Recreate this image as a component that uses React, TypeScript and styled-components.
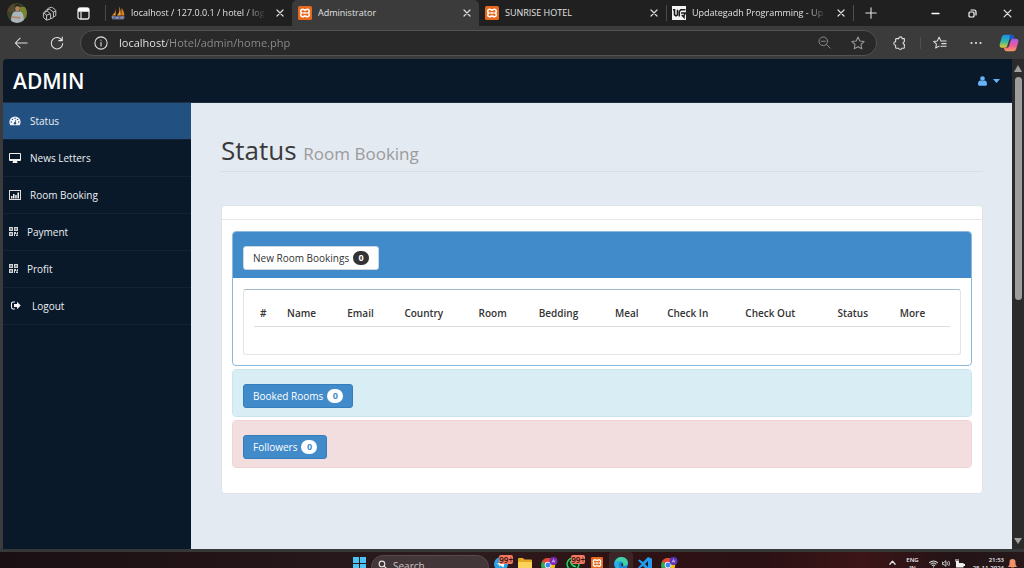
import React from "react";
import styled, { createGlobalStyle } from "styled-components";

const baseFont = `"Open Sans", "Liberation Sans", sans-serif`;

const GlobalStyle = createGlobalStyle`
  *, *::before, *::after { box-sizing: border-box; }
  html, body { margin: 0; padding: 0; }
  body { background: #3b3b3b; overflow: hidden; }
  button, input { font: inherit; color: inherit; margin: 0; padding: 0; border: 0; background: none; }
  button { cursor: pointer; }
  svg { display: block; flex: none; }
`;

const Window = styled.div`
  height: 100vh;
  display: flex;
  flex-direction: column;
  overflow: hidden;
  font-family: ${baseFont};
  color: #e2e2e2;
`;

/* ---------- browser tab strip ---------- */

const TabStrip = styled.header`
  flex: none;
  display: flex;
  align-items: stretch;
  height: 26px;
  background: #202020;
`;

const IconCell = styled.button<{ $width: number }>`
  flex: none;
  width: ${(p) => p.$width}px;
  display: flex;
  align-items: center;
  justify-content: center;
`;

const TabLead = styled.div`
  flex: none;
  display: flex;
  width: 105px;
`;

const Tab = styled.div<{ $active?: boolean; $line?: boolean }>`
  flex: 0 1 187px;
  min-width: 0;
  display: flex;
  align-items: center;
  gap: 6px;
  padding: 0 4px 0 5px;
  font-size: 9px;
  line-height: 16px;
  background: ${(p) => (p.$active ? "#3b3b3b" : "transparent")};
  border-radius: 5px 5px 0 0;
  &::before {
    content: "";
    flex: none;
    width: 1px;
    height: 16px;
    margin: 0 -1px 0 -5px;
    background: ${(p) => (p.$line ? "#4a4a4a" : "transparent")};
  }
`;

const TabTitle = styled.button<{ $fade?: boolean }>`
  flex: 1;
  min-width: 0;
  overflow: hidden;
  white-space: nowrap;
  text-align: left;
  mask-image: ${(p) => (p.$fade ? "linear-gradient(to right, #000 85%, transparent)" : "none")};
`;

const CloseTab = styled.button`
  flex: none;
  width: 16px;
  height: 16px;
  display: flex;
  align-items: center;
  justify-content: center;
`;

const StripLine = styled.span<{ $height: number }>`
  flex: none;
  align-self: center;
  width: 1px;
  height: ${(p) => p.$height}px;
  background: #4f4f4f;
`;

const WindowControls = styled.div`
  display: flex;
  margin-left: auto;
`;

/* ---------- browser toolbar ---------- */

const Toolbar = styled.nav`
  flex: none;
  display: flex;
  align-items: center;
  height: 33px;
  padding-left: 3px;
  background: #3b3b3b;
`;

const AddressBar = styled.div`
  flex: 1;
  min-width: 0;
  display: flex;
  align-items: center;
  height: 26px;
  margin: 0 3px 0 5px;
  padding: 0 2px;
  border: 1px solid #525252;
  border-radius: 13px;
  background: #292929;
`;

const AddressInput = styled.input`
  flex: 1;
  min-width: 0;
  font-size: 11px;
  line-height: 16px;
  color: transparent;
  background: linear-gradient(to right, #f2f2f2 48px, #8e8e8e 48px);
  background-clip: text;
  -webkit-background-clip: text;
`;

/* ---------- page ---------- */

const Viewport = styled.div`
  flex: 1;
  min-height: 0;
  display: flex;
  padding-left: 3px;
  background: #3b3b3b;
`;

const Page = styled.div`
  flex: 1;
  min-width: 0;
  display: flex;
  flex-direction: column;
  overflow: hidden;
  border-radius: 4px 0 0 0;
  background: #09192a;
`;

const TopBar = styled.header`
  flex: none;
  display: flex;
  align-items: center;
  justify-content: space-between;
  height: 44px;
  padding: 0 12px 0 10px;
  border-bottom: 1px solid #1d3045;
`;

const Brand = styled.a`
  font-size: 21px;
  line-height: 30px;
  font-weight: 600;
  color: #fff;
  text-decoration: none;
`;

const UserButton = styled.button`
  display: flex;
  align-items: center;
  gap: 6px;
  color: #64b5fb;
`;

const Columns = styled.div`
  flex: 1;
  min-height: 0;
  display: flex;
`;

const SideNav = styled.nav`
  flex: none;
  width: 188px;
`;

const NavLink = styled.a<{ $active?: boolean }>`
  display: flex;
  align-items: center;
  gap: 9px;
  height: 37px;
  padding: 0 6px 1px;
  border-bottom: 1px solid #102338;
  font-size: 10px;
  line-height: 16px;
  color: #eceff2;
  text-decoration: none;
  background: ${(p) => (p.$active ? "#225081" : "transparent")};
`;

const Content = styled.main`
  flex: 1;
  min-width: 0;
  padding: 30px 29px 30px 30px;
  background: #e4eaf2;
  color: #333;
`;

const PageHeading = styled.h1`
  margin: 0 0 33px;
  border-bottom: 1px solid #d5dde8;
  font-size: 26px;
  line-height: 34px;
  font-weight: 400;
  color: #3a3a3a;
`;

const Sub = styled.small`
  font-size: 17px;
  color: #9b9b9b;
`;

const Card = styled.section`
  border: 1px solid #dfe3e8;
  border-radius: 4px;
  background: #fff;
`;

const CardHead = styled.div`
  height: 14px;
  border-bottom: 1px solid #e8e8e8;
`;

const CardBody = styled.div`
  display: flex;
  flex-direction: column;
  gap: 3px;
  padding: 11px 10px 25px;
`;

type Tone = "primary" | "info" | "danger";

const tones: Record<Tone, { border: string; head: string }> = {
  primary: { border: "#8db9de", head: "#428bca" },
  info: { border: "#c9e6ee", head: "#d9edf5" },
  danger: { border: "#efd3d6", head: "#f2dede" },
};

const Panel = styled.section<{ $tone: Tone }>`
  border: 1px solid ${(p) => tones[p.$tone].border};
  border-radius: 4px;
  overflow: hidden;
  background: #fff;
`;

const PanelHead = styled.div<{ $tone: Tone }>`
  padding: 14px 10px 8px;
  background: ${(p) => tones[p.$tone].head};
`;

const PanelBody = styled.div`
  padding: 11px 10px 10px;
`;

const CountButton = styled.button<{ $light?: boolean }>`
  display: flex;
  align-items: center;
  gap: 4px;
  height: 24px;
  padding: 0 9px;
  border: 1px solid ${(p) => (p.$light ? "#ccd6e0" : "#357ebd")};
  border-radius: 3px;
  font-size: 10px;
  line-height: 16px;
  color: ${(p) => (p.$light ? "#333" : "#fff")};
  background: ${(p) => (p.$light ? "#fff" : "#428bca")};
`;

const Badge = styled.span<{ $light?: boolean }>`
  min-width: 16px;
  border-radius: 7px;
  font-size: 9px;
  line-height: 14px;
  font-weight: 700;
  text-align: center;
  color: ${(p) => (p.$light ? "#fff" : "#428bca")};
  background: ${(p) => (p.$light ? "#333" : "#fff")};
`;

const TableBox = styled.div`
  padding: 10px 10px 27px;
  border: 1px solid #e4e4e4;
  border-top-color: #a3b9d0;
  border-radius: 3px;
`;

const Table = styled.table`
  width: 100%;
  table-layout: fixed;
  border-collapse: collapse;
  font-size: 10px;
  line-height: 16px;
`;

const Th = styled.th`
  padding: 5px 6px;
  border-bottom: 1px solid #dcdcdc;
  text-align: left;
  white-space: nowrap;
  font-weight: 600;
  color: #333;
`;

/* ---------- scroll bar ---------- */

const ScrollBar = styled.div`
  flex: none;
  width: 12px;
  display: flex;
  flex-direction: column;
  align-items: center;
  padding: 6px 0 5px;
  gap: 5px;
  color: #a0a0a0;
  background: #2b2b2b;
`;

const ScrollTrack = styled.div`
  flex: 1;
  width: 7px;
`;

const ScrollThumb = styled.div`
  height: 49%;
  border-radius: 4px;
  background: #9d9d9d;
`;

/* ---------- taskbar ---------- */

const TaskBar = styled.footer`
  flex: none;
  display: grid;
  grid-template-columns: 1fr auto 1fr;
  height: 19px;
  border-top: 3px solid #363838;
  overflow: hidden;
  background: linear-gradient(to right, #1a1014, #221416 20%, #2c1c1f 45%, #2e1214 60%, #2c1114 75%, #3c1517 84%, #241316 93%, #26181b);
`;

const TaskApps = styled.div`
  grid-column: 2;
  display: flex;
  align-items: flex-start;
  padding-left: 4px;
`;

const AppButton = styled.button<{ $active?: boolean }>`
  position: relative;
  width: 24px;
  height: 26px;
  padding: 5px 0 0;
  display: flex;
  align-items: flex-start;
  justify-content: center;
  border-radius: 3px;
  background: ${(p) => (p.$active ? "#3b2527" : "transparent")};
`;

const AppBadge = styled.span`
  position: absolute;
  top: 3px;
  right: 0;
  border-radius: 2px;
  font-size: 8px;
  font-weight: 600;
  line-height: 9px;
  color: #30100c;
  background: #f4775f;
`;

const SearchBox = styled.label`
  display: flex;
  align-items: flex-start;
  gap: 6px;
  width: 118px;
  height: 24px;
  margin-top: 3px;
  padding: 4px 6px 0;
  border: 1px solid #584a4c;
  border-radius: 12px;
  background: #433638;
`;

const SearchInput = styled.input`
  width: 80px;
  height: 12px;
  font-size: 10px;
  line-height: 12px;
  &::placeholder { color: #c9c3c4; opacity: 1; }
`;

const Tray = styled.div`
  display: flex;
  align-items: flex-start;
  justify-content: flex-end;
  padding: 4px 7px 0 0;
  gap: 4px;
  font-size: 6px;
  font-weight: 600;
  line-height: 8px;
  color: #f0f0f0;
`;

const TrayText = styled.span<{ $right?: boolean; $width: number }>`
  width: ${(p) => p.$width}px;
  text-align: ${(p) => (p.$right ? "right" : "center")};
  white-space: nowrap;
`;

const TrayIcons = styled.div`
  display: flex;
  gap: 4px;
  padding-top: 3px;
`;

/* ---------- drawings ---------- */

const Stroke = ({ size = 14, box = 16, w = 1.2, color = "currentColor", children }: { size?: number; box?: number; w?: number; color?: string; children: React.ReactNode }) => (
  <svg width={size} height={size} viewBox={`0 0 ${box} ${box}`} fill="none" stroke={color} strokeWidth={w} strokeLinecap="round" strokeLinejoin="round" aria-hidden="true">
    {children}
  </svg>
);

const Avatar = () => (
  <svg width="20" height="20" viewBox="0 0 20 20" aria-hidden="true">
    <defs>
      <clipPath id="face"><circle cx="10" cy="10" r="10" /></clipPath>
    </defs>
    <g clipPath="url(#face)">
      <rect width="20" height="20" fill="#3a4427" />
      <rect x="13" y="4" width="7" height="12" fill="#77852f" />
      <rect width="7" height="9" fill="#55462f" />
      <path d="M4 20c0-7 1-10 3.500-11.500h6c2.500 1 3.500 5 3.500 11.500z" fill="#a9b6c0" />
      <path d="M5 13l9 1-1 2-8-1z" fill="#b98a70" />
      <ellipse cx="10.500" cy="5.500" rx="2.300" ry="3" fill="#b27e62" />
      <path d="M8 4.800c0-4.500 5.200-4.500 5.200 0l-1-1.500H9z" fill="#1f1916" />
    </g>
  </svg>
);

const Workspaces = () => (
  <Stroke size={15} w={1} color="#cfcfcf">
    <path d="M5.800 4.400V3.700c0-.7.4-1.100 1-1.300l3-1c.6-.2 1-.1 1.400.3l2.900 2.200c.4.3.6.7.6 1.300v4.600c0 .6-.3 1-.9 1.200l-1.500.5" />
    <path d="M3.500 6.200V5.700c0-.6.400-1 .9-1.200l3-.9c.5-.2.900-.1 1.300.2l2.900 2.300c.4.300.6.700.6 1.200v4.200c0 .6-.3 1-.8 1.200l-2.200.8" />
    <path d="M1.500 7.700c0-.6.400-.9.900-1.100l2.800-.8c.5-.1.900-.1 1.200.2L8.600 8c.4.300.6.700.6 1.200v3.700c0 .5-.3.900-.8 1.100l-2.800.9c-.5.100-.9.100-1.300-.2l-2.200-1.900c-.4-.3-.6-.7-.6-1.200z" />
    <path d="M2 7.500l2.900 2.300v4.900M4.900 9.800l4-1.300M12 6.500l2.500-.9" />
  </Stroke>
);

const TabActions = () => (
  <svg width="13" height="13" viewBox="0 0 13 13" aria-hidden="true">
    <rect x="1" y="1" width="11" height="11" rx="2" fill="none" stroke="#e6e6e6" strokeWidth="1.300" />
    <path d="M1 3a2 2 0 012-2h7a2 2 0 012 2v1.800H1z" fill="#fff" />
    <path d="M4 5v7" stroke="#e6e6e6" strokeWidth="1.200" />
  </svg>
);

const PmaIcon = () => (
  <svg width="14" height="14" viewBox="0 0 14 14" aria-hidden="true">
    <path d="M4.500 1.500C4.800 5 3.500 8 .8 9.500h4z" fill="#e8922b" />
    <path d="M7.500 0c1.700 3.500 1 7-1.700 9.500H9.800C10 6 9.500 2.500 7.500 0z" fill="#f6a12f" />
    <path d="M10.500 2c2 2 2.800 5 2.800 7.500h-3z" fill="#e07f1f" />
    <path d="M.5 10h13v1.200l-1 2.300H1.500L.5 11.500z" fill="#5c6488" />
    <path d="M1.500 12.500v-1.700h1.500M5 13v-2l1 1 1-1v2M10 13v-2h2v2" stroke="#aab0cf" fill="none" strokeWidth=".7" />
  </svg>
);

const Xampp = ({ size = 14 }: { size?: number }) => (
  <svg width={size} height={size} viewBox="0 0 14 14" aria-hidden="true">
    <rect width="14" height="14" rx="1.500" fill="#e8681d" />
    <path d="M4.700 3.200c1.400 0 1.700 1 2.300 1 .6 0 .9-1 2.300-1 2.400 0 2.600 3 1 3.800 1.600.8 1.400 3.800-1 3.800-1.400 0-1.700-1-2.300-1-.6 0-.9 1-2.300 1-2.400 0-2.600-3-1-3.800-1.600-.8-1.400-3.800 1-3.800z" fill="none" stroke="#fff" strokeWidth="1.600" />
    <path d="M5.300 7h3.400" stroke="#fff" strokeWidth="1.500" />
  </svg>
);

const UgIcon = () => (
  <svg width="14" height="14" viewBox="0 0 14 14" aria-hidden="true">
    <rect width="14" height="14" fill="#f4f4f4" />
    <path d="M1 3.800h1.500v5L4 9.800l1.500-1v-5" fill="none" stroke="#1b1b1b" strokeWidth="1.600" />
    <path d="M13.500 3.800H8.800L7.300 5.500v5M9 7h4.500L12 9.500v1.800L9.800 9" fill="none" stroke="#1b1b1b" strokeWidth="1.500" />
  </svg>
);

const Cross = ({ size = 8 }: { size?: number }) => (
  <Stroke size={size} box={8} w={1.2} color="#dedede"><path d="M1 1l6 6M7 1L1 7" /></Stroke>
);

const Copilot = () => (
  <svg width="20" height="18" viewBox="0 0 20 18" aria-hidden="true">
    <defs>
      <linearGradient id="cpA" x1="0" y1="0" x2="0" y2="1">
        <stop offset="0" stopColor="#1c8be8" /><stop offset=".5" stopColor="#2fb7a6" /><stop offset="1" stopColor="#e8c92a" />
      </linearGradient>
      <linearGradient id="cpB" x1="0" y1="0" x2="0" y2="1">
        <stop offset="0" stopColor="#a45cf0" /><stop offset=".55" stopColor="#ee5a9a" /><stop offset="1" stopColor="#f99a5c" />
      </linearGradient>
    </defs>
    <path d="M6 .8h6.500c1.300 0 1.800.8 2.200 2l.6 2H12c-1.200 0-1.800.8-2.200 2L8.200 12c-.4 1.200-1 1.700-2.200 1.700H3C.8 13.700.2 12 .8 10l2-7C3.300 1.500 4.300.8 6 .8z" fill="url(#cpA)" />
    <path d="M14 17.200H7.500c-1.300 0-1.800-.8-2.200-2l-.5-1.500H8c1.200 0 1.800-.8 2.200-2l1.600-5.200c.4-1.200 1-1.700 2.200-1.700h3c2.200 0 2.800 1.700 2.200 3.700l-2 6.500c-.5 1.500-1.500 2.200-3.200 2.200z" fill="url(#cpB)" />
    <path d="M11 .8h1.500c1.300 0 1.800.8 2.200 2l.6 2H12c-1 0-1.600.5-2 1.400z" fill="#1856c9" />
  </svg>
);

const Dashboard = () => (
  <svg width="12" height="10" viewBox="0 0 12 10" aria-hidden="true">
    <path d="M6 .5A5.600 5.600 0 00.4 6c0 1.200.3 2.300.9 3.200h9.400c.6-.9.9-2 .9-3.200A5.600 5.600 0 006 .5z" fill="#f2f5f8" />
    <g fill="#225081">
      <circle cx="2.300" cy="6" r=".7" /><circle cx="3.400" cy="3.400" r=".7" /><circle cx="6" cy="2.300" r=".7" />
      <circle cx="8.600" cy="3.400" r=".7" /><circle cx="9.700" cy="6" r=".7" /><circle cx="6" cy="7.200" r="1.200" />
    </g>
    <path d="M6 7.200l.8-3.400" stroke="#225081" strokeWidth=".8" />
  </svg>
);

const Desktop = () => (
  <svg width="12" height="10" viewBox="0 0 12 10" aria-hidden="true">
    <path d="M1 0h10a1 1 0 011 1v6a1 1 0 01-1 1H8l.4 1.500v.5H3.600v-.5L4 8H1a1 1 0 01-1-1V1a1 1 0 011-1zm0 1v5h10V1z" fill="#f2f2f2" fillRule="evenodd" />
  </svg>
);

const BarChart = () => (
  <svg width="12" height="10" viewBox="0 0 12 10" aria-hidden="true">
    <rect x=".5" y=".5" width="11" height="9" fill="none" stroke="#e4dcdc" />
    <path d="M2 6h1.500v2.500H2zM4 4h1.500v4.500H4zM6.200 5h1.500v3.500H6.200zM8.400 2.500H10v6H8.400z" fill="#f2f2f2" />
  </svg>
);

const QrCode = () => (
  <svg width="9" height="9" viewBox="0 0 9 9" aria-hidden="true">
    <g fill="#5a6470" stroke="#d4d4d8" strokeWidth="1">
      <rect x=".5" y=".5" width="3" height="3" /><rect x="5.500" y=".5" width="3" height="3" /><rect x=".5" y="5.500" width="3" height="3" />
    </g>
    <path d="M1.500 1.500h1v1h-1zM6.500 1.500h1v1h-1zM1.500 6.500h1v1h-1zM5 5h2v1.500h1V5h1v2.500H7V7H6v2H5zM7 8h1v1H7zM8 8h1v1H8z" fill="#d4d4d8" />
  </svg>
);

const SignOut = () => (
  <svg width="14" height="9" viewBox="0 0 14 9" aria-hidden="true">
    <path d="M6 1H4.200A1.700 1.700 0 002.500 2.700v3.600A1.700 1.700 0 004.200 8H6" fill="none" stroke="#f2f2f2" strokeWidth="1.100" />
    <path d="M8 .8l3.700 3.700L8 8.200V6H5V3h3z" fill="#f5f5f5" />
  </svg>
);

const UserIcon = () => (
  <svg width="9" height="10" viewBox="0 0 9 10" aria-hidden="true">
    <circle cx="4.500" cy="2.600" r="2.300" fill="currentColor" />
    <path d="M0 8.500C0 6 .9 4.700 2.400 4.600c1.200 1 3 1 4.200 0C8.100 4.700 9 6 9 8.500 9 9.300 8.400 9.700 7.700 9.700H1.300C.6 9.700 0 9.300 0 8.500z" fill="currentColor" />
  </svg>
);

const Caret = ({ w = 7, h = 4, up = false }: { w?: number; h?: number; up?: boolean }) => (
  <svg width={w} height={h} viewBox="0 0 6 4" preserveAspectRatio="none" aria-hidden="true">
    <path d={up ? "M3 0l3 4H0z" : "M0 0h6L3 4z"} fill="currentColor" />
  </svg>
);

const WindowsLogo = () => (
  <svg width="13" height="13" viewBox="0 0 13 13" aria-hidden="true">
    <path d="M0 0h6v6H0zM7 0h6v6H7zM0 7h6v6H0zM7 7h6v6H7z" fill="#4cc2f5" />
  </svg>
);

const Telegram = () => (
  <svg width="14" height="14" viewBox="0 0 14 14" aria-hidden="true">
    <circle cx="7" cy="7" r="7" fill="#2aa1e0" />
    <path d="M2.500 7l8.500-3.500-1.500 7-3-2.200-1.200 1.200-.2-2z" fill="#fff" />
  </svg>
);

const Folder = () => (
  <svg width="14" height="13" viewBox="0 0 14 13" aria-hidden="true">
    <path d="M0 2a1 1 0 011-1h4l1.500 1.500H13a1 1 0 011 1V11H0z" fill="#e5a823" />
    <path d="M0 5h14v6a1 1 0 01-1 1H1a1 1 0 01-1-1z" fill="#fcd45c" />
  </svg>
);

const Chrome = ({ badge }: { badge: string }) => (
  <svg width="18" height="17" viewBox="0 0 18 17" aria-hidden="true">
    <circle cx="8" cy="8" r="7" fill="#34a853" />
    <path d="M8 8L2 4.500A7 7 0 0114.500 5H8z" fill="#ea4335" />
    <path d="M8 15a7 7 0 006.500-10H8l3 5z" fill="#fbbc05" />
    <circle cx="8" cy="8" r="3.300" fill="#fff" />
    <circle cx="8" cy="8" r="2.500" fill="#4285f4" />
    <circle cx="13.500" cy="4" r="4" fill={badge} />
    <path d="M12.100 5.500l1.400-3 1.400 3M12.600 4.600h1.800" stroke="#e0cdf5" strokeWidth=".7" fill="none" />
  </svg>
);

const WhatsApp = () => (
  <svg width="14" height="14" viewBox="0 0 14 14" aria-hidden="true">
    <circle cx="7" cy="7" r="6" fill="#10301c" stroke="#25d366" strokeWidth="1.500" />
    <path d="M4.500 4c0 3 2.500 5.500 5.500 5.500" stroke="#25d366" strokeWidth="1.500" fill="none" />
  </svg>
);

const Edge = () => (
  <svg width="14" height="14" viewBox="0 0 14 14" aria-hidden="true">
    <circle cx="7" cy="7" r="7" fill="#1787d6" />
    <path d="M.5 6.500C1 2.500 4 0 7.500 0 11.500 0 14 3 14 5.800 14 8 12 9 10.500 9 8 9 9.500 7.500 9 6 8 3.500 3 3.500.5 6.500z" fill="#3fd0a4" />
    <path d="M5 6.500c-1 3 1 6 4.500 6.500H7A7 7 0 01.2 6C2 4 7 3.500 8.500 5.500c-1.500-.7-3 0-3.500 1z" fill="#2ab0e4" />
    <path d="M8.700 6.200c1 1.300-.3 2.300.8 2.900-2 .4-3.400-2-.8-2.900z" fill="#2b1a1c" />
  </svg>
);

const VsCode = () => (
  <svg width="14" height="14" viewBox="0 0 14 14" aria-hidden="true">
    <path d="M10 0l4 1.800v10.400L10 14 5 9 1.500 11.500 0 10.500 3.500 7 0 3.500l1.500-1L5 5zM10 4L7 7l3 3z" fill="#1f9cf0" fillRule="evenodd" />
  </svg>
);

/* ---------- data ---------- */

const tabs = [
  { title: "localhost / 127.0.0.1 / hotel / log", icon: <PmaIcon />, line: true, fade: true },
  { title: "Administrator", icon: <Xampp />, active: true },
  { title: "SUNRISE HOTEL", icon: <Xampp /> },
  { title: "Updategadh Programming - Up", icon: <UgIcon />, line: true, fade: true },
];

const links = [
  { label: "Status", icon: <Dashboard />, active: true },
  { label: "News Letters", icon: <Desktop /> },
  { label: "Room Booking", icon: <BarChart /> },
  { label: "Payment", icon: <QrCode /> },
  { label: "Profit", icon: <QrCode /> },
  { label: "Logout", icon: <SignOut /> },
];

const columns: [string, number][] = [
  ["#", 27], ["Name", 60], ["Email", 57], ["Country", 74], ["Room", 60], ["Bedding", 76],
  ["Meal", 52], ["Check In", 78], ["Check Out", 92], ["Status", 62], ["More", 56],
];

export default function App() {
  return (
    <Window>
      <GlobalStyle />
      <TabStrip>
        <TabLead>
          <IconCell $width={34} aria-label="Profile"><Avatar /></IconCell>
          <IconCell $width={31} aria-label="Workspaces"><Workspaces /></IconCell>
          <IconCell $width={36} aria-label="Tab actions"><TabActions /></IconCell>
        </TabLead>
        {tabs.map((t) => (
          <Tab key={t.title} $active={t.active} $line={t.line}>
            {t.icon}
            <TabTitle $fade={t.fade}>{t.title}</TabTitle>
            <CloseTab aria-label="Close tab"><Cross /></CloseTab>
          </Tab>
        ))}
        <StripLine $height={16} />
        <IconCell $width={34} aria-label="New tab">
          <Stroke size={12} box={12} w={1.1}><path d="M6 .8v10.400M.8 6h10.400" /></Stroke>
        </IconCell>
        <WindowControls>
          <IconCell $width={37} aria-label="Minimize">
            <Stroke size={9} box={9} w={1.3} color="#fff"><path d="M1 4.500h7" /></Stroke>
          </IconCell>
          <IconCell $width={37} aria-label="Restore">
            <Stroke size={9} box={9} w={1.2} color="#fff">
              <rect x="1" y="3" width="5" height="5" rx="1" />
              <path d="M3 1h3a2 2 0 012 2v3" />
            </Stroke>
          </IconCell>
          <IconCell $width={33} aria-label="Close"><Cross size={9} /></IconCell>
        </WindowControls>
      </TabStrip>

      <Toolbar aria-label="Browser">
        <IconCell $width={36} aria-label="Back">
          <Stroke><path d="M15 8H1.500M7 2.500L1.500 8 7 13.500" /></Stroke>
        </IconCell>
        <IconCell $width={36} aria-label="Refresh">
          <Stroke><path d="M14.500 8.500A6.500 6.500 0 118 1.800c2.500 0 4.500 1.300 5.500 3.200M14 1.300V5.300h-4" /></Stroke>
        </IconCell>
        <AddressBar>
          <IconCell $width={36} aria-label="Site information">
            <Stroke><circle cx="8" cy="8" r="7" /><path d="M8 7.300v4M8 4.600v.3" /></Stroke>
          </IconCell>
          <AddressInput aria-label="Address" defaultValue="localhost/Hotel/admin/home.php" />
          <IconCell $width={33} aria-label="Zoom">
            <Stroke size={13} color="#8b8b8b"><circle cx="6.500" cy="6.500" r="5.300" /><path d="M10.500 10.500l4.500 4.500M4 6.500h5" /></Stroke>
          </IconCell>
          <IconCell $width={33} aria-label="Add to favorites">
            <Stroke color="#9a9a9a"><path d="M8 1.200l2.100 4.500 4.900.6-3.600 3.400.9 4.900L8 12.200l-4.300 2.400.9-4.900L1 6.300l4.900-.6z" /></Stroke>
          </IconCell>
        </AddressBar>
        <IconCell $width={40} aria-label="Extensions">
          <Stroke><path d="M4 3h2.500a2 2 0 014 0H13v3.500a1.500 1.500 0 00-1.500 1.500A1.500 1.500 0 0013 9.500V13a1 1 0 01-1 1h-2a1.800 1.800 0 01-3.500 0H4a1 1 0 01-1-1v-2.500a2 2 0 010-4V4a1 1 0 011-1z" /></Stroke>
        </IconCell>
        <StripLine $height={12} />
        <IconCell $width={38} aria-label="Favorites">
          <Stroke><path d="M9 5.600L7 1.300 5 5.600l-4.300.6 3.200 3.100-.8 4.500L7 11.600M9 5.600h6M10 8.700h5M9 11.800h6" /></Stroke>
        </IconCell>
        <IconCell $width={34} aria-label="Settings and more">
          <svg width="12" height="4" viewBox="0 0 12 4" fill="#e0e0e0" aria-hidden="true"><circle cx="1.500" cy="2" r="1.100" /><circle cx="6" cy="2" r="1.100" /><circle cx="10.500" cy="2" r="1.100" /></svg>
        </IconCell>
        <IconCell $width={31} aria-label="Copilot"><Copilot /></IconCell>
      </Toolbar>

      <Viewport>
        <Page>
          <TopBar>
            <Brand href="#">ADMIN</Brand>
            <UserButton aria-label="Account"><UserIcon /><Caret /></UserButton>
          </TopBar>
          <Columns>
            <SideNav aria-label="Main">
              {links.map((l) => (
                <NavLink key={l.label} href="#" $active={l.active}>{l.icon}{l.label}</NavLink>
              ))}
            </SideNav>
            <Content>
              <PageHeading>Status <Sub>Room Booking</Sub></PageHeading>
              <Card>
                <CardHead />
                <CardBody>
                  <Panel $tone="primary">
                    <PanelHead $tone="primary">
                      <CountButton $light>New Room Bookings <Badge $light>0</Badge></CountButton>
                    </PanelHead>
                    <PanelBody>
                      <TableBox>
                        <Table>
                          <colgroup>
                            {columns.map(([name, width]) => <col key={name} width={width} />)}
                          </colgroup>
                          <thead>
                            <tr>{columns.map(([name]) => <Th key={name} scope="col">{name}</Th>)}</tr>
                          </thead>
                          <tbody />
                        </Table>
                      </TableBox>
                    </PanelBody>
                  </Panel>
                  <Panel $tone="info">
                    <PanelHead $tone="info"><CountButton>Booked Rooms <Badge>0</Badge></CountButton></PanelHead>
                  </Panel>
                  <Panel $tone="danger">
                    <PanelHead $tone="danger"><CountButton>Followers <Badge>0</Badge></CountButton></PanelHead>
                  </Panel>
                </CardBody>
              </Card>
            </Content>
          </Columns>
        </Page>
        <ScrollBar aria-hidden="true">
          <Caret up w={8} h={7} />
          <ScrollTrack><ScrollThumb /></ScrollTrack>
          <Caret w={8} h={6} />
        </ScrollBar>
      </Viewport>

      <TaskBar>
        <TaskApps>
          <AppButton aria-label="Start"><WindowsLogo /></AppButton>
          <SearchBox>
            <Stroke size={9} w={2}><circle cx="7" cy="7" r="5" /><path d="M11 11l4 4" /></Stroke>
            <SearchInput aria-label="Search" placeholder="Search" />
          </SearchBox>
          <AppButton aria-label="Telegram"><Telegram /><AppBadge>99+</AppBadge></AppButton>
          <AppButton aria-label="Files"><Folder /></AppButton>
          <AppButton aria-label="Chrome"><Chrome badge="#7a2bb0" /></AppButton>
          <AppButton aria-label="WhatsApp"><WhatsApp /><AppBadge>99+</AppBadge></AppButton>
          <AppButton aria-label="XAMPP"><Xampp size={12} /></AppButton>
          <AppButton aria-label="Edge" $active><Edge /></AppButton>
          <AppButton aria-label="Code"><VsCode /></AppButton>
          <AppButton aria-label="Chrome, second profile"><Chrome badge="#5a35b5" /></AppButton>
        </TaskApps>
        <Tray>
          <TrayIcons>
            <Stroke size={7} box={8} w={1.4} color="#e8e8e8"><path d="M1 6l3-3.500L7 6" /></Stroke>
          </TrayIcons>
          <TrayText $width={25}>ENG<br />IN</TrayText>
          <TrayIcons>
            <Stroke size={9} w={1.8} color="#d8d8d8"><path d="M1 6.500c4-4 10-4 14 0M3.500 9c3-2.700 6-2.700 9 0M6 11.500c1.500-1 2.500-1 4 0M8 14v.2" /></Stroke>
            <Stroke size={9} w={1.6} color="#d8d8d8"><path d="M1 6v4h2.500L7 13V3L3.500 6zM9.500 6c1 1.300 1 2.700 0 4M12 4c2 2.500 2 5.500 0 8" /></Stroke>
            <svg width="10" height="9" viewBox="0 0 10 9" aria-hidden="true"><path d="M1 2h3v2h4.500v1H10v2H8.500v1.500H1z" fill="#f0f0f0" /><path d="M1 0v3M3 0v3" stroke="#f0f0f0" /></svg>
          </TrayIcons>
          <TrayText $width={35} $right>21:53<br />28-11-2024</TrayText>
          <TrayIcons>
            <svg width="9" height="10" viewBox="0 0 9 10" aria-hidden="true"><path d="M4.500 0a3 3 0 013 3v2.500L9 8H0l1.500-2.500V3a3 3 0 013-3zM3 8.500h3a1.500 1.500 0 01-3 0z" fill="#f49069" /></svg>
          </TrayIcons>
        </Tray>
      </TaskBar>
    </Window>
  );
}
